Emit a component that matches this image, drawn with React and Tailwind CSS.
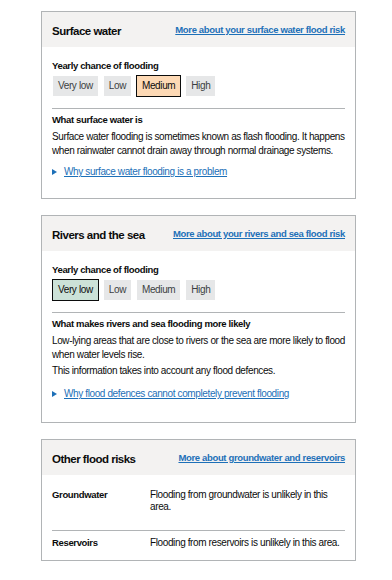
import React from 'react';

const levels = ['Very low', 'Low', 'Medium', 'High'];

const RiskScale = ({ active, activeClass }) => (
    <div className="flex gap-[4px] mt-[2px]">
        {levels.map((l) => (
            <div
                key={l}
                className={
                    l === active
                        ? 'h-[22px] px-[5px] flex items-center border border-[#0b0c0c] text-[#0b0c0c] ' + activeClass
                        : 'h-[22px] px-[5px] flex items-center border border-white bg-[#e6e7e8] bg-clip-padding text-[#3b3f42]'
                }
            >
                {l}
            </div>
        ))}
    </div>
);

const Card = ({ title, link, children }) => (
    <div className="border border-[#b1b4b6] bg-white">
        <div className="h-[35px] px-[10px] bg-[#f3f2f1] flex items-center justify-between whitespace-nowrap">
            <h2 className="font-bold text-[11.5px] tracking-[-0.5px] text-[#0b0c0c] mt-[2px]">{title}</h2>
            <a href="#" className="font-bold text-[9.5px] tracking-[-0.35px] text-[#1d70b8] underline">{link}</a>
        </div>
        {children}
    </div>
);

const Details = ({ text }) => (
    <div className="flex items-center text-[#1d70b8]">
        <svg width="12" height="6" viewBox="0 0 12 6" className="shrink-0">
            <path d="M0 0 L5 3 L0 6 Z" fill="#1d70b8" />
        </svg>
        <a href="#" className="underline">{text}</a>
    </div>
);

const Bold = ({ children, className = '' }) => (
    <p className={'font-bold text-[9.5px] tracking-[-0.35px] ' + className}>{children}</p>
);

export default function App() {
    return (
        <div
            className="bg-white min-h-[580px] pl-[41px] pr-[36px] pt-[11px] text-[10px] tracking-[-0.38px] leading-[14px] text-[#0b0c0c]"
            style={{ fontFamily: '"Liberation Sans", Arial, sans-serif' }}
        >
            <Card title="Surface water" link="More about your surface water flood risk">
                <div className="px-[10px] pt-[12px] pb-[19px]">
                    <Bold>Yearly chance of flooding</Bold>
                    <RiskScale active="Medium" activeClass="bg-[#fdd9b5]" />
                    <div className="border-t border-[#b1b4b6] mt-[11px] pt-[4px]">
                        <Bold>What surface water is</Bold>
                        <p className="mt-[3px]">
                            Surface water flooding is sometimes known as flash flooding. It happens when rainwater cannot drain away through normal drainage systems.
                        </p>
                        <div className="mt-[7px]">
                            <Details text="Why surface water flooding is a problem" />
                        </div>
                    </div>
                </div>
            </Card>

            <div className="mt-[16px]">
                <Card title="Rivers and the sea" link="More about your rivers and sea flood risk">
                    <div className="px-[10px] pt-[12px] pb-[21px]">
                        <Bold>Yearly chance of flooding</Bold>
                        <RiskScale active="Very low" activeClass="bg-[#cce2d8]" />
                        <div className="border-t border-[#b1b4b6] mt-[11px] pt-[4px]">
                            <Bold>What makes rivers and sea flooding more likely</Bold>
                            <p className="mt-[3px]">
                                Low-lying areas that are close to rivers or the sea are more likely to flood when water levels rise.
                            </p>
                            <p className="mt-[2px]">This information takes into account any flood defences.</p>
                            <div className="mt-[9px]">
                                <Details text="Why flood defences cannot completely prevent flooding" />
                            </div>
                        </div>
                    </div>
                </Card>
            </div>

            <div className="mt-[16px]">
                <Card title="Other flood risks" link="More about groundwater and reservoirs">
                    <div className="px-[10px] pt-[14px] pb-[11px] leading-[12px]">
                        <div className="grid grid-cols-[98px_1fr] pb-[17px]">
                            <Bold>Groundwater</Bold>
                            <span>Flooding from groundwater is unlikely in this area.</span>
                        </div>
                        <div className="grid grid-cols-[98px_1fr] border-t border-[#b1b4b6] pt-[6px]">
                            <Bold>Reservoirs</Bold>
                            <span>Flooding from reservoirs is unlikely in this area.</span>
                        </div>
                    </div>
                </Card>
            </div>
        </div>
    );
}
